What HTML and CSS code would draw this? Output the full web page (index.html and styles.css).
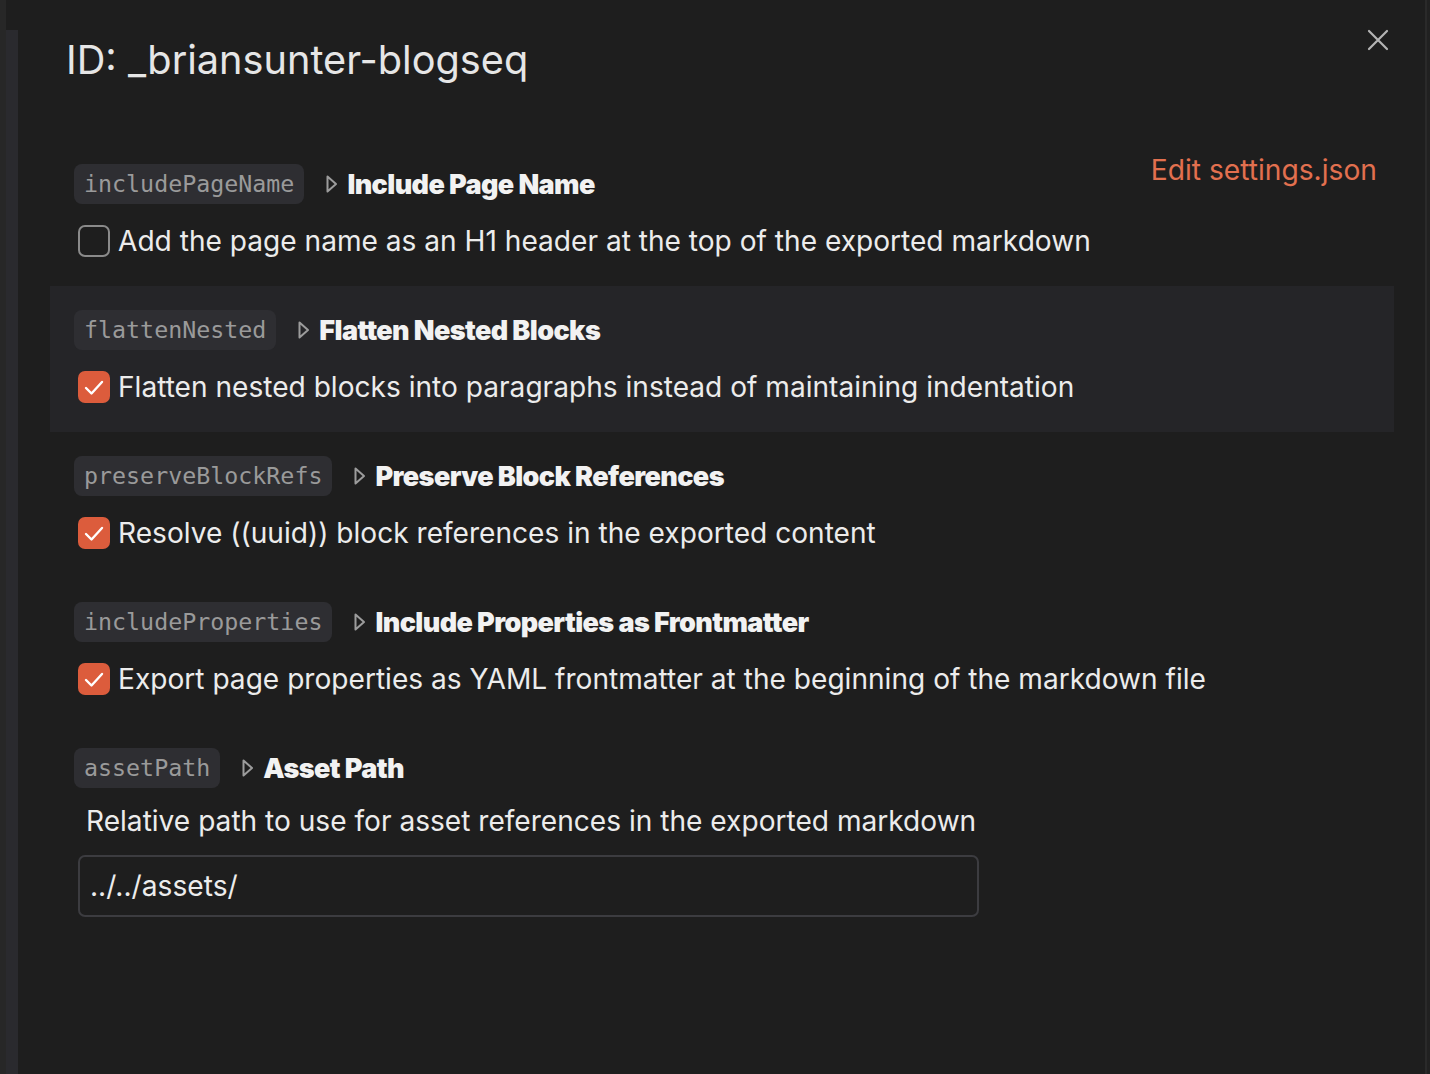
FILE: index.html
```html
<!DOCTYPE html>
<html lang="en">
<head>
  <meta charset="UTF-8" />
  <meta name="viewport" content="width=device-width, initial-scale=1.0"/>
  <title>Plugin Settings</title>
  <link rel="stylesheet" href="styles.css">
</head>
<body>

<div class="app">
  <div class="rail"></div>
  <div class="rail-inner"><div class="rail-fill"></div></div>

  <main class="modal">
    <button class="close-btn" title="Close">
      <svg width="22" height="22" viewBox="0 0 22 22"><path d="M2 2 L20 20 M20 2 L2 20" stroke="#b4b4b4" stroke-width="2.2" stroke-linecap="round" fill="none"/></svg>
    </button>

    <h1 class="modal-title">ID: _briansunter-blogseq</h1>

    <div class="settings">
      <!-- includePageName -->
      <div class="setting">
        <div class="setting-head">
          <code class="key">includePageName</code>
          <svg class="caret" width="13" height="20" viewBox="0 0 13 20"><path d="M2.5 2.5 L11 10 L2.5 17.5 Z" stroke="#9c9c9c" stroke-width="2" stroke-linejoin="round" fill="none"/></svg>
          <span class="setting-title">Include Page Name</span>
          <a class="edit-link" href="#">Edit settings.json</a>
        </div>
        <label class="setting-desc">
          <span class="check"></span>
          Add the page name as an H1 header at the top of the exported markdown
        </label>
      </div>

      <!-- flattenNested -->
      <div class="setting hovered">
        <div class="setting-head">
          <code class="key">flattenNested</code>
          <svg class="caret" width="13" height="20" viewBox="0 0 13 20"><path d="M2.5 2.5 L11 10 L2.5 17.5 Z" stroke="#9c9c9c" stroke-width="2" stroke-linejoin="round" fill="none"/></svg>
          <span class="setting-title">Flatten Nested Blocks</span>
        </div>
        <label class="setting-desc">
          <span class="check checked"><svg width="32" height="32" viewBox="0 0 32 32"><path d="M8 17 L13.5 22.5 L24 11" stroke="#fff" stroke-width="2.4" stroke-linecap="round" stroke-linejoin="round" fill="none"/></svg></span>
          Flatten nested blocks into paragraphs instead of maintaining indentation
        </label>
      </div>

      <!-- preserveBlockRefs -->
      <div class="setting">
        <div class="setting-head">
          <code class="key">preserveBlockRefs</code>
          <svg class="caret" width="13" height="20" viewBox="0 0 13 20"><path d="M2.5 2.5 L11 10 L2.5 17.5 Z" stroke="#9c9c9c" stroke-width="2" stroke-linejoin="round" fill="none"/></svg>
          <span class="setting-title">Preserve Block References</span>
        </div>
        <label class="setting-desc">
          <span class="check checked"><svg width="32" height="32" viewBox="0 0 32 32"><path d="M8 17 L13.5 22.5 L24 11" stroke="#fff" stroke-width="2.4" stroke-linecap="round" stroke-linejoin="round" fill="none"/></svg></span>
          Resolve ((uuid)) block references in the exported content
        </label>
      </div>

      <!-- includeProperties -->
      <div class="setting">
        <div class="setting-head">
          <code class="key">includeProperties</code>
          <svg class="caret" width="13" height="20" viewBox="0 0 13 20"><path d="M2.5 2.5 L11 10 L2.5 17.5 Z" stroke="#9c9c9c" stroke-width="2" stroke-linejoin="round" fill="none"/></svg>
          <span class="setting-title">Include Properties as Frontmatter</span>
        </div>
        <label class="setting-desc">
          <span class="check checked"><svg width="32" height="32" viewBox="0 0 32 32"><path d="M8 17 L13.5 22.5 L24 11" stroke="#fff" stroke-width="2.4" stroke-linecap="round" stroke-linejoin="round" fill="none"/></svg></span>
          Export page properties as YAML frontmatter at the beginning of the markdown file
        </label>
      </div>

      <!-- assetPath -->
      <div class="setting">
        <div class="setting-head">
          <code class="key">assetPath</code>
          <svg class="caret" width="13" height="20" viewBox="0 0 13 20"><path d="M2.5 2.5 L11 10 L2.5 17.5 Z" stroke="#9c9c9c" stroke-width="2" stroke-linejoin="round" fill="none"/></svg>
          <span class="setting-title">Asset Path</span>
        </div>
        <div class="setting-text">Relative path to use for asset references in the exported markdown</div>
        <div class="text-input">../../assets/</div>
      </div>
    </div>
  </main>

  <div class="edge"></div>
</div>

</body>
</html>
```

FILE: styles.css
```css
* {
  box-sizing: border-box;
}

body {
  margin: 0;
  background: #1e1e1e;
  font-family: Inter, "Noto Sans", sans-serif;
  color: #ececec;
}

.app {
  display: flex;
  height: 100vh;
  overflow: hidden;
}

/* left side rails */
.rail {
  width: 6px;
  background: #272727;
}

.rail-inner {
  width: 12px;
  padding-top: 30px;
}

.rail-fill {
  height: 100%;
  background: #2a2a2e;
}

.edge {
  width: 5px;
  background: #212121;
  border-left: 2px solid #2a2a2a;
}

/* modal */
.modal {
  flex: 1;
  position: relative;
  padding: 36px 31px 0 32px;
}

.close-btn {
  position: absolute;
  top: 29px;
  right: 36px;
  background: transparent;
  border: none;
  padding: 0;
  cursor: pointer;
}

.modal-title {
  margin: 0 0 56px 16px;
  font-size: 39.7px;
  line-height: 48px;
  font-weight: 400;
  color: #e6e6e6;
}

.setting {
  padding: 24px 24px 29px;
}

.setting.hovered {
  background: #252528;
}

.setting-head {
  display: flex;
  align-items: center;
  height: 40px;
}

.key {
  font-family: "DejaVu Sans Mono", "Liberation Mono", monospace;
  font-size: 23.3px;
  line-height: 40px;
  color: #9a9a9a;
  background: #2e2e32;
  padding: 0 10px;
  border-radius: 8px;
}

.caret {
  margin: 0 9px 0 21px;
  flex-shrink: 0;
}

.setting-title {
  font-size: 27px;
  font-weight: 900;
  letter-spacing: -0.6px;
  color: #f2f2f2;
}

.edit-link {
  margin-left: auto;
  margin-right: -7px;
  align-self: flex-start;
  margin-top: -11px;
  font-size: 28.2px;
  line-height: 34px;
  color: #e2704f;
  text-decoration: none;
}

.setting-desc {
  display: flex;
  align-items: center;
  gap: 8px;
  margin-top: 21px;
  padding-left: 4px;
  height: 32px;
  font-size: 28.1px;
  color: #ececec;
}

.check {
  width: 32px;
  height: 32px;
  border: 2px solid #8a8a8a;
  border-radius: 7px;
  flex-shrink: 0;
}

.check.checked {
  border: none;
  background: #dc5c3c;
}

.check svg {
  display: block;
}

.setting-text {
  margin-top: 17px;
  padding-left: 12px;
  font-size: 28.1px;
  line-height: 32px;
}

.text-input {
  margin: 18px 0 0 4px;
  width: 901px;
  height: 62px;
  border: 2px solid #3c3c40;
  border-radius: 7px;
  padding: 0 10px;
  display: flex;
  align-items: center;
  font-size: 28.2px;
  color: #ececec;
}
```
